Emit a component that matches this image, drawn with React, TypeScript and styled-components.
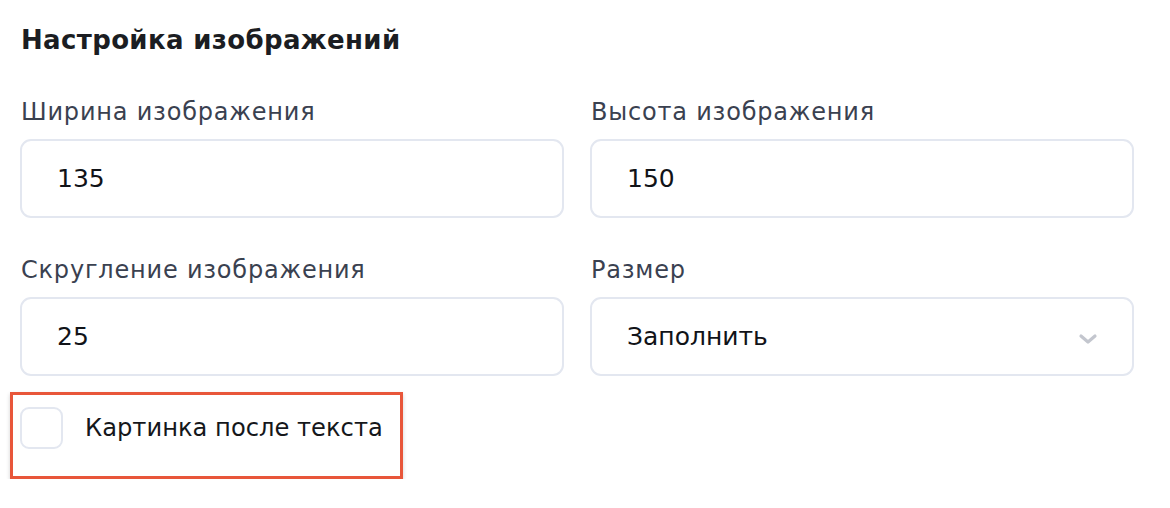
import React from "react";
import styled, { createGlobalStyle } from "styled-components";

const Global = createGlobalStyle`
  html, body { margin: 0; padding: 0; background: #ffffff; }
  body { font-family: "DejaVu Sans", sans-serif; -webkit-font-smoothing: antialiased; }
  * { box-sizing: border-box; }
`;

const Panel = styled.div`
  width: 1170px;
  padding: 22px 0 0 20px;
`;

const Title = styled.h2`
  margin: 0 0 40px 1px;
  font-size: 26px;
  line-height: 36px;
  font-weight: 600;
  letter-spacing: 0.35px;
  color: #1b1d22;
`;

const Grid = styled.div`
  display: grid;
  grid-template-columns: 544px 544px;
  column-gap: 26px;
  row-gap: 38px;
  width: 1114px;
`;

const Field = styled.div`
  display: flex;
  flex-direction: column;
  gap: 13px;
`;

const Label = styled.label`
  font-size: 24px;
  line-height: 28px;
  letter-spacing: 0.8px;
  color: #3a4150;
  padding-left: 1px;
`;

const Box = styled.div`
  height: 79px;
  border: 2px solid #e3e7f0;
  border-radius: 11px;
  display: flex;
  align-items: center;
  justify-content: space-between;
  padding: 0 34px 0 35px;
  font-size: 25px;
  color: #111318;
`;

const Chevron = styled.svg`
  width: 20px;
  height: 12px;
  margin-top: 4px;
`;

const Highlight = styled.div`
  margin: 16px 0 0 -10px;
  width: 393px;
  height: 87px;
  border: 3px solid #e8563a;
  box-shadow: 0 2px 4px rgba(0, 0, 0, 0.18);
  display: flex;
  align-items: flex-start;
  padding: 12px 0 0 7px;
  gap: 22px;
`;

const Check = styled.div`
  width: 43px;
  height: 42px;
  border: 2px solid #e3e7f0;
  border-radius: 9px;
  flex: none;
`;

const CheckLabel = styled.span`
  font-size: 24.2px;
  line-height: 42px;
  color: #15171b;
`;

export default function App() {
  return (
    <>
      <Global />
      <Panel>
        <Title>Настройка изображений</Title>
        <Grid>
          <Field>
            <Label>Ширина изображения</Label>
            <Box>135</Box>
          </Field>
          <Field>
            <Label>Высота изображения</Label>
            <Box>150</Box>
          </Field>
          <Field>
            <Label>Скругление изображения</Label>
            <Box>25</Box>
          </Field>
          <Field>
            <Label>Размер</Label>
            <Box>
              Заполнить
              <Chevron viewBox="0 0 20 12">
                <path d="M3 3 L10 9 L17 3" fill="none" stroke="#c3c6ce" strokeWidth="3.2" strokeLinecap="round" strokeLinejoin="round" />
              </Chevron>
            </Box>
          </Field>
        </Grid>
        <Highlight>
          <Check />
          <CheckLabel>Картинка после текста</CheckLabel>
        </Highlight>
      </Panel>
    </>
  );
}
